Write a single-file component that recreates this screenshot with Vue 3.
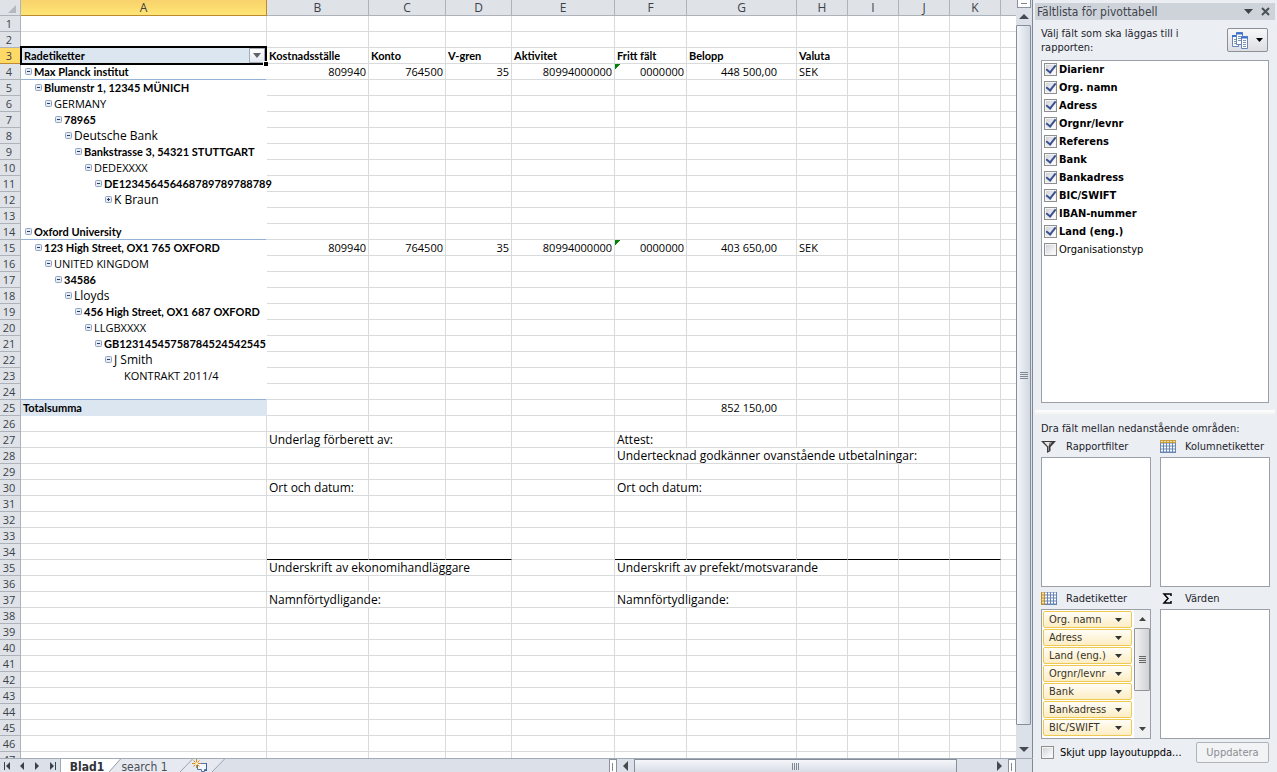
<script setup>
const columns = [
  { name: 'A', cls: 'ca' }, { name: 'B', cls: 'cb' }, { name: 'C', cls: 'cc' }, { name: 'D', cls: 'cd' },
  { name: 'E', cls: 'ce' }, { name: 'F', cls: 'cf' }, { name: 'G', cls: 'cg' }, { name: 'H', cls: 'cn' },
  { name: 'I', cls: 'cn' }, { name: 'J', cls: 'cn' }, { name: 'K', cls: 'cn' }, { name: '', cls: 'cl' },
]
const tree = {
  4: [0, 'Max Planck institut'], 5: [1, 'Blumenstr 1, 12345 MÜNICH'], 6: [2, 'GERMANY'], 7: [3, '78965'],
  8: [4, 'Deutsche Bank'], 9: [5, 'Bankstrasse 3, 54321 STUTTGART'], 10: [6, 'DEDEXXXX'],
  11: [7, 'DE123456456468789789788789'], 12: [8, 'K Braun'],
  14: [0, 'Oxford University'], 15: [1, '123 High Street, OX1 765 OXFORD'], 16: [2, 'UNITED KINGDOM'], 17: [3, '34586'],
  18: [4, 'Lloyds'], 19: [5, '456 High Street, OX1 687 OXFORD'], 20: [6, 'LLGBXXXX'],
  21: [7, 'GB12314545758784524542545'], 22: [8, 'J Smith'], 23: [9, 'KONTRAKT 2011/4'],
}
const boldLevels = [0, 1, 3, 5, 7]
const codeLevels = [2, 6, 9]
const amounts = (sum) => ({
  B: { t: '809940', c: 'num' }, C: { t: '764500', c: 'num' }, D: { t: '35', c: 'num' },
  E: { t: '80994000000', c: 'num' }, F: { t: '0000000', c: 'num flag' }, G: { t: sum, c: 'num money' }, H: { t: 'SEK', c: 'code' },
})
const data = {
  3: {
    B: { t: 'Kostnadsställe', c: 'bold' }, C: { t: 'Konto', c: 'bold' }, D: { t: 'V-gren', c: 'bold' },
    E: { t: 'Aktivitet', c: 'bold' }, F: { t: 'Fritt fält', c: 'bold' }, G: { t: 'Belopp', c: 'bold' }, H: { t: 'Valuta', c: 'bold' },
  },
  4: amounts('448 500,00'),
  15: amounts('403 650,00'),
  25: { A: { t: 'Totalsumma', c: 'bold total' }, G: { t: '852 150,00', c: 'num money' } },
  27: { B: { t: 'Underlag förberett av:', s: 2 }, F: { t: 'Attest:' } },
  28: { F: { t: 'Undertecknad godkänner ovanstående utbetalningar:', s: 5 } },
  30: { B: { t: 'Ort och datum:' }, F: { t: 'Ort och datum:', s: 2 } },
  35: { B: { t: 'Underskrift av ekonomihandläggare', s: 3 }, F: { t: 'Underskrift av prefekt/motsvarande', s: 3 } },
  37: { B: { t: 'Namnförtydligande:', s: 2 }, F: { t: 'Namnförtydligande:', s: 2 } },
}
const rows = Array.from({ length: 47 }, (_, i) => {
  const n = i + 1
  const cells = []
  for (let k = 0; k < columns.length; k++) {
    const name = columns[k].name
    const d = (data[n] && data[n][name]) || {}
    const cls = [d.c || '']
    if (name === 'A' && n >= 4 && n <= 24) cls.push('pivot')
    if (name === 'A' && [4, 14, 24].includes(n)) cls.push('blue')
    if (n === 34 && name && !['A', 'E'].includes(name)) cls.push('sign')
    cells.push({ name, t: d.t || '', s: d.s || 1, cls, tree: name === 'A' ? tree[n] : null, filter: n === 3 && name === 'A' })
    if (d.s) k += d.s - 1
  }
  return { n, cells }
})
const fields = ['Diarienr', 'Org. namn', 'Adress', 'Orgnr/levnr', 'Referens', 'Bank', 'Bankadress', 'BIC/SWIFT', 'IBAN-nummer', 'Land (eng.)', 'Organisationstyp']
const rowLabels = ['Org. namn', 'Adress', 'Land (eng.)', 'Orgnr/levnr', 'Bank', 'Bankadress', 'BIC/SWIFT']
</script>

<template>
  <div class="app">
    <main class="book">
      <div class="upper">
        <div class="sheet">
          <table>
            <colgroup>
              <col class="ch">
              <col v-for="(c, i) in columns" :key="i" :class="c.cls">
            </colgroup>
            <thead>
              <tr>
                <th class="corner"><svg width="9" height="9" viewBox="0 0 9 9"><path d="M8 0v8H0z" fill="#b4b9c0" /></svg></th>
                <th v-for="(c, i) in columns" :key="i" scope="col" :class="{ active: c.name === 'A' }">{{ c.name }}</th>
              </tr>
            </thead>
            <tbody>
              <tr v-for="r in rows" :key="r.n">
                <th scope="row" :class="{ active: r.n === 3 }">{{ r.n }}</th>
                <td v-for="c in r.cells" :key="c.name" :colspan="c.s" :class="c.cls">
                  <div v-if="c.filter" class="selected">
                    <span>Radetiketter</span>
                    <button class="filter" aria-label="Filter"><svg width="8" height="5" viewBox="0 0 8 5"><path d="M0 0h8L4 5z" fill="#5f6369" /></svg></button>
                    <i class="handle"></i>
                  </div>
                  <div v-else-if="c.tree" class="node" :class="{ bold: boldLevels.includes(c.tree[0]), code: codeLevels.includes(c.tree[0]) }">
                    <i v-for="k in c.tree[0]" :key="k" class="indent"></i>
                    <button v-if="c.tree[0] < 9" class="toggle" :aria-label="c.tree[1]">
                      <svg width="7" height="7" viewBox="0 0 7 7">
                        <rect x=".5" y=".5" width="6" height="6" rx="1" fill="#e4ebf5" stroke="#91a3bf" />
                        <path d="M2 3.500h3" stroke="#243c66" />
                        <path v-if="r.n === 12" d="M3.500 2v3" stroke="#243c66" />
                      </svg>
                    </button>
                    <i v-else class="toggle"></i>
                    <span>{{ c.tree[1] }}</span>
                  </div>
                  <template v-else>{{ c.t }}</template>
                </td>
              </tr>
            </tbody>
          </table>
        </div>
        <div class="vscroll">
          <div class="split"><i></i></div>
          <button class="arrow" aria-label="Upp"><svg width="10" height="5" viewBox="0 0 10 5"><path d="M5 0l5 5H0z" fill="#464a50" /></svg></button>
          <div class="thumb"><i></i><i></i><i></i><i></i></div>
          <button class="arrow down" aria-label="Ned"><svg width="10" height="5" viewBox="0 0 10 5"><path d="M0 0h10L5 5z" fill="#464a50" /></svg></button>
        </div>
      </div>
      <div class="tabs">
        <div class="nav">
          <button aria-label="Första"><svg width="7" height="8" viewBox="0 0 7 8"><path d="M0 0h1v8H0zM6 0v8L2 4z" /></svg></button>
          <button aria-label="Föregående"><svg width="7" height="8" viewBox="0 0 7 8"><path d="M5 0v8L1 4z" /></svg></button>
          <button aria-label="Nästa"><svg width="7" height="8" viewBox="0 0 7 8"><path d="M1 0v8l4-4z" /></svg></button>
          <button aria-label="Sista"><svg width="7" height="8" viewBox="0 0 7 8"><path d="M6 0h1v8H6zM1 0v8l4-4z" /></svg></button>
        </div>
        <div class="strip">
          <svg class="shapes" width="170" height="14" viewBox="0 0 170 14">
            <path d="M0 0H60L48 14H0z" fill="#fff" />
            <path d="M60 .5H133L120 14H48z" fill="#e6eaf0" />
            <path d="M133 .5h31L151 14H120z" fill="#e6eaf0" />
            <path d="M48 14L60 .5h104L151 14M119 14L132 .5" fill="none" stroke="#9ba3ad" />
            <path d="M136.500 5.500h9v6h-2v2h-3v-2h-4z" fill="#f4f7fc" stroke="#5574a8" />
            <path d="M145.500 5v7M143 12.500h3" stroke="#3d5f9c" />
            <path d="M135.500 1v9M131 5.500h9M132.500 2.500l6 6M138.500 2.500l-6 6" stroke="#dc8a1c" />
            <circle cx="135.500" cy="5.500" r="1.500" fill="#fff7c8" />
          </svg>
          <button class="tab on">Blad1</button>
          <button class="tab">search 1</button>
        </div>
        <div class="hscroll">
          <div class="grip"><i></i></div>
          <button aria-label="Vänster"><svg width="5" height="10" viewBox="0 0 5 10"><path d="M5 0v10L0 5z" /></svg></button>
          <div class="track"><div class="hthumb"><i></i><i></i><i></i><i></i></div></div>
          <button aria-label="Höger"><svg width="5" height="10" viewBox="0 0 5 10"><path d="M0 0v10l5-5z" /></svg></button>
          <div class="grip"><i></i></div>
          <div class="end"></div>
        </div>
      </div>
    </main>

    <aside class="pane">
      <header>
        <h2>Fältlista för pivottabell</h2>
        <button aria-label="Alternativ"><svg width="9" height="5" viewBox="0 0 9 5"><path d="M0 0h9L4.500 5z" fill="#3f444c" /></svg></button>
        <button aria-label="Stäng"><svg width="9" height="9" viewBox="0 0 9 9"><path d="M1 1l7 7M8 1L1 8" stroke="#4c5158" stroke-width="2" /></svg></button>
      </header>
      <div class="intro">
        <p>Välj fält som ska läggas till i rapporten:</p>
        <button class="layout" aria-label="Layout">
          <svg width="16" height="17" viewBox="0 0 16 17">
            <g fill="#fff" stroke="#6685b8"><path d="M.5 3.500h6v11h-6z" /><path d="M4.500.500h6v12h-6z" /><path d="M9.500 4.500h6v12h-6z" /></g>
            <path d="M0 4h4M4 1.500h7M9 5.500h7" stroke="#3d72cf" stroke-width="2" />
            <path d="M2 7.500h2M2 9.500h2M2 11.500h2M6 4.500h3M6 6.500h3M6 8.500h3M11 8.500h3M11 10.500h3M11 12.500h3M11 14.500h3" stroke="#8292ad" />
          </svg>
          <svg width="7" height="4" viewBox="0 0 7 4"><path d="M0 0h7L3.500 4z" fill="#000" /></svg>
        </button>
      </div>
      <div class="fields">
        <label v-for="(f, i) in fields" :key="f" :class="{ bold: i < 10 }">
          <input type="checkbox" :checked="i < 10"><span>{{ f }}</span>
        </label>
      </div>
      <div class="divider"></div>
      <p class="drag">Dra fält mellan nedanstående områden:</p>
      <div class="areas">
        <section>
          <h3><svg width="16" height="12" viewBox="0 0 16 12"><path d="M0 0h15L9.500 6v4L6 12V6z" fill="#3c3c3c" /><path d="M3 1h6L7.500 5.500v4L7 10V5.500z" fill="#e8e8e8" /><path d="M9 1h2L8.500 5z" fill="#9a9a9a" /></svg><span>Rapportfilter</span></h3>
          <div class="box"></div>
        </section>
        <section>
          <h3><svg width="16" height="13" viewBox="0 0 16 13"><path d="M0 0h16v13H0z" fill="#6684b4" /><path d="M0 0h16v3H0z" fill="#c79d42" /><path d="M1 1.500h14" stroke="#f7df98" stroke-width="1" stroke-dasharray="2 1" /><path d="M1 4.500h14M1 7.500h14M1 10.500h14" stroke="#fff" stroke-width="2" stroke-dasharray="2 1" /></svg><span>Kolumnetiketter</span></h3>
          <div class="box"></div>
        </section>
        <section>
          <h3><svg width="16" height="13" viewBox="0 0 16 13"><path d="M0 0h16v13H0z" fill="#6684b4" /><path d="M4 1.500h11M4 4.500h11M4 7.500h11M4 10.500h11" stroke="#fff" stroke-width="2" stroke-dasharray="2 1" /><path d="M0 0h4v13H0z" fill="#b98e35" /><path d="M1 1.500h2M1 4.500h2M1 7.500h2M1 10.500h2" stroke="#f7df98" stroke-width="2" /></svg><span>Radetiketter</span></h3>
          <div class="box list">
            <div class="items">
              <button v-for="r in rowLabels" :key="r"><span>{{ r }}</span><svg width="7" height="4" viewBox="0 0 7 4"><path d="M0 0h7L3.500 4z" fill="#333" /></svg></button>
            </div>
            <div class="mini">
              <button aria-label="Upp"><svg width="7" height="4" viewBox="0 0 7 4"><path d="M3.500 0L7 4H0z" fill="#444" /></svg></button>
              <div class="mthumb"><i></i><i></i><i></i><i></i></div>
              <button class="down" aria-label="Ned"><svg width="7" height="4" viewBox="0 0 7 4"><path d="M0 0h7L3.500 4z" fill="#444" /></svg></button>
            </div>
          </div>
        </section>
        <section>
          <h3><svg width="16" height="11" viewBox="0 0 16 11"><path d="M11 3V1H4l4 4.500L4 10h7V8" fill="none" stroke="#000" stroke-width="1.500" /></svg><span>Värden</span></h3>
          <div class="box"></div>
        </section>
      </div>
      <footer>
        <label><input type="checkbox"><span>Skjut upp layoutuppda...</span></label>
        <button disabled>Uppdatera</button>
      </footer>
    </aside>
  </div>
</template>

<style>
html, body { margin: 0; height: 100%; overflow: hidden; }
#app { height: 100%; }
</style>

<style scoped>
* { box-sizing: border-box; }
button { margin: 0; padding: 0; border: 0; background: none; color: inherit; font: inherit; display: flex; align-items: center; justify-content: center; }
svg { display: block; flex: none; }
.app { display: flex; height: 100vh; background: #fff; font: 11px "DejaVu Sans Condensed", "DejaVu Sans", sans-serif; color: #000; }
.book { flex: 1; min-width: 0; display: flex; flex-direction: column; }
.upper { flex: 1; min-height: 0; display: flex; }
.sheet { flex: 1; min-width: 0; overflow: hidden; }

table { width: 100%; table-layout: fixed; border-collapse: separate; border-spacing: 0; font: 12px/15px "Open Sans", sans-serif; }
.ch { width: 21px; } .ca { width: 246px; } .cb { width: 102px; } .cc { width: 77px; } .cd { width: 66px; }
.ce { width: 103px; } .cf { width: 72px; } .cg { width: 110px; } .cn { width: 51px; } .cl { width: auto; }
th { height: 16px; padding: 0; font-weight: 400; color: #3c4148; background: #dfe3e8; border-right: 1px solid #adb3bb; border-bottom: 1px solid #adb3bb; text-align: center; line-height: 15px; }
tbody th { font-size: 11px; padding-right: 2px; }
thead th:last-child { border-right: 0; }
thead th.active { background: linear-gradient(#f8d26c, #ffe575); border-color: #bf8a2f; }
tbody th.active { background: #ffd965; border-color: #bf8a2f; }
.corner svg { margin-left: 8px; margin-top: 3px; }
td { height: 16px; padding: 0 2px; border-right: 1px solid #d9dadc; border-bottom: 1px solid #d9dadc; white-space: nowrap; line-height: 15px; }
td:last-child { border-right: 0; }
.bold { font-family: Lato, sans-serif; font-size: 11px; font-weight: 700; }
.code { font-size: 11px; }
.num { text-align: right; font-size: 11px; }
.money { padding-right: 19px; }
.flag { background: linear-gradient(135deg, #078107 4px, transparent 4px) no-repeat; }
.pivot { border-bottom-color: #fff; border-right-color: #fff; padding: 0 4px; }
td.blue { border-bottom-color: #95b3d7; }
.total { background: #dce6f1; border-color: #dce6f1; }
.sign { border-bottom-color: #000; }
.node { display: flex; align-items: center; height: 15px; }
.indent { width: 10px; flex: none; }
.toggle { width: 9px; height: 15px; flex: none; justify-content: flex-start; }
.selected { position: relative; display: flex; justify-content: space-between; height: 19px; margin: -3px -3px -2px -3px; padding-left: 2px; background: #dce6f1; border: 2px solid #000; font-family: Lato, sans-serif; font-size: 11px; font-weight: 700; }
.filter { width: 16px; height: 15px; background: linear-gradient(#fff, #e4e9f0); border: 1px solid #a5adb8; }
.handle { position: absolute; right: -3px; bottom: -3px; width: 5px; height: 5px; background: #000; border: 1px solid #fff; border-width: 1px 0 0 1px; }

.vscroll { width: 17px; flex: none; display: flex; flex-direction: column; background: #dce1e9; border-right: 1px solid #7f8894; }
.split { height: 8px; margin: 0 1px; padding: 3px 3px 0; background: #fff; border: 1px solid #8a929e; border-top: 0; }
.split i { display: block; height: 1px; background: #7f8894; }
.arrow { height: 17px; }
.thumb { flex: 1; margin-right: 1px; border: 1px solid #858e9b; border-radius: 1px; background: linear-gradient(90deg, #f4f6fa, #d3d8e1); display: flex; flex-direction: column; align-items: center; justify-content: center; gap: 1px; }
.thumb i { width: 8px; height: 1px; background: #7f8894; }
.arrow.down { height: 33px; padding-top: 15px; }

.tabs { flex: none; height: 14px; display: flex; background: #dce1e9; border-top: 1px solid #a3abb6; }
.nav { width: 61px; display: flex; justify-content: space-around; align-items: center; fill: #39414d; border-right: 1px solid #a3abb6; }
.strip { position: relative; flex: 1; display: flex; align-items: flex-start; overflow: hidden; }
.shapes { position: absolute; left: 0; top: -1px; }
.tab { position: relative; height: 15px; width: 47px; padding-top: 1px; font: 12px/14px "DejaVu Sans Condensed", sans-serif; color: #4a4e55; white-space: nowrap; }
.tab.on { width: 52px; margin-right: 11px; font-weight: 700; color: #2f3338; }
.tab:not(.on) { margin-right: 0; margin-left: -3px; }
.hscroll { display: flex; flex: 0 0 424px; fill: #464a50; }
.hscroll button { width: 17px; }
.grip { width: 8px; flex: none; padding: 3px 2px 0; background: #fff; border: 1px solid #8a929e; border-bottom: 0; }
.grip i { display: block; width: 1px; height: 8px; background: #7f8894; }
.track { flex: 1; padding-right: 34px; }
.hthumb { height: 14px; border: 1px solid #858e9b; border-bottom: 0; border-radius: 1px 1px 0 0; background: linear-gradient(#f4f6fa, #d6dbe4); display: flex; align-items: center; justify-content: center; gap: 1px; }
.hthumb i { width: 1px; height: 7px; background: #7f8894; }
.end { width: 17px; border-right: 1px solid #7f8894; }

.pane { width: 244px; flex: none; display: flex; flex-direction: column; padding: 3px 2px 0; background: #ebeef3; color: #1e1e2c; }
header { height: 17px; display: flex; align-items: center; gap: 8px; padding: 0 5px 0 2px; background: #ced3da; }
h2 { flex: 1; margin: 0; font-size: 12px; font-weight: 400; color: #3f444c; }
.intro { display: flex; justify-content: space-between; padding: 7px 7px 0 6px; height: 40px; }
.intro p { width: 150px; margin: 0; line-height: 14px; }
.layout { width: 41px; height: 24px; gap: 8px; border: 1px solid #8b8f96; border-radius: 2px; background: linear-gradient(#f8f8f9, #dcdee2); margin-top: 1px; }
.fields { flex: 1; margin: 0 6px; border: 1px solid #9ba0a8; background: #fff; }
label { display: flex; align-items: center; }
.fields label { height: 18px; gap: 2px; padding: 0 0 2px 2px; color: #000; }
.fields .bold { font: 700 11px "DejaVu Sans Condensed", sans-serif; }
input { appearance: none; width: 13px; height: 13px; margin: 0; flex: none; border: 1px solid #8e8f8f; background: linear-gradient(135deg, #cfd3d9, #fff) 50% / 9px 9px no-repeat #f4f4f4; display: grid; place-items: center; }
input:checked::after { content: ""; width: 4px; height: 8px; margin-top: -2px; border: solid #3b5192; border-width: 0 2px 2px 0; transform: rotate(38deg); }
.divider { height: 5px; margin-top: 7px; background: linear-gradient(#fff, #eef0f0); }
.drag { margin: 7px 6px 0; line-height: 14px; }
.areas { display: grid; grid-template-columns: 1fr 1fr; gap: 1px 9px; padding: 0 5px 0 6px; }
h3 { height: 21px; margin: 0; display: flex; align-items: center; gap: 9px; font-size: 11px; font-weight: 400; }
.box { height: 130px; border: 1px solid #9ba0a8; background: #fff; }
.list { display: flex; justify-content: space-between; }
.items { width: 90px; padding: 1px 0 0 1px; display: flex; flex-direction: column; gap: 1px; }
.items button { height: 17px; justify-content: space-between; padding: 0 9px 0 5px; color: #393428; border: 1px solid #efca53; border-radius: 2px; background: linear-gradient(#fffdf6, #fdedc4); }
.mini { width: 16px; display: flex; flex-direction: column; background: #eff0f1; }
.mini button { height: 18px; }
.mini .down { margin-top: auto; }
.mthumb { height: 63px; border: 1px solid #90949a; border-radius: 1px; background: linear-gradient(90deg, #f2f2f2, #cfd1d4); display: flex; flex-direction: column; align-items: center; justify-content: center; gap: 1px; }
.mthumb i { width: 7px; height: 1px; background: #666; }
footer { display: flex; align-items: center; justify-content: space-between; padding: 3px 6px 9px 6px; }
footer label { gap: 6px; color: #000; }
footer button { width: 73px; height: 21px; border: 1px solid #b0b3b8; border-radius: 2px; color: #8b8e94; background: #f2f3f5; font-size: 11px; }
</style>
